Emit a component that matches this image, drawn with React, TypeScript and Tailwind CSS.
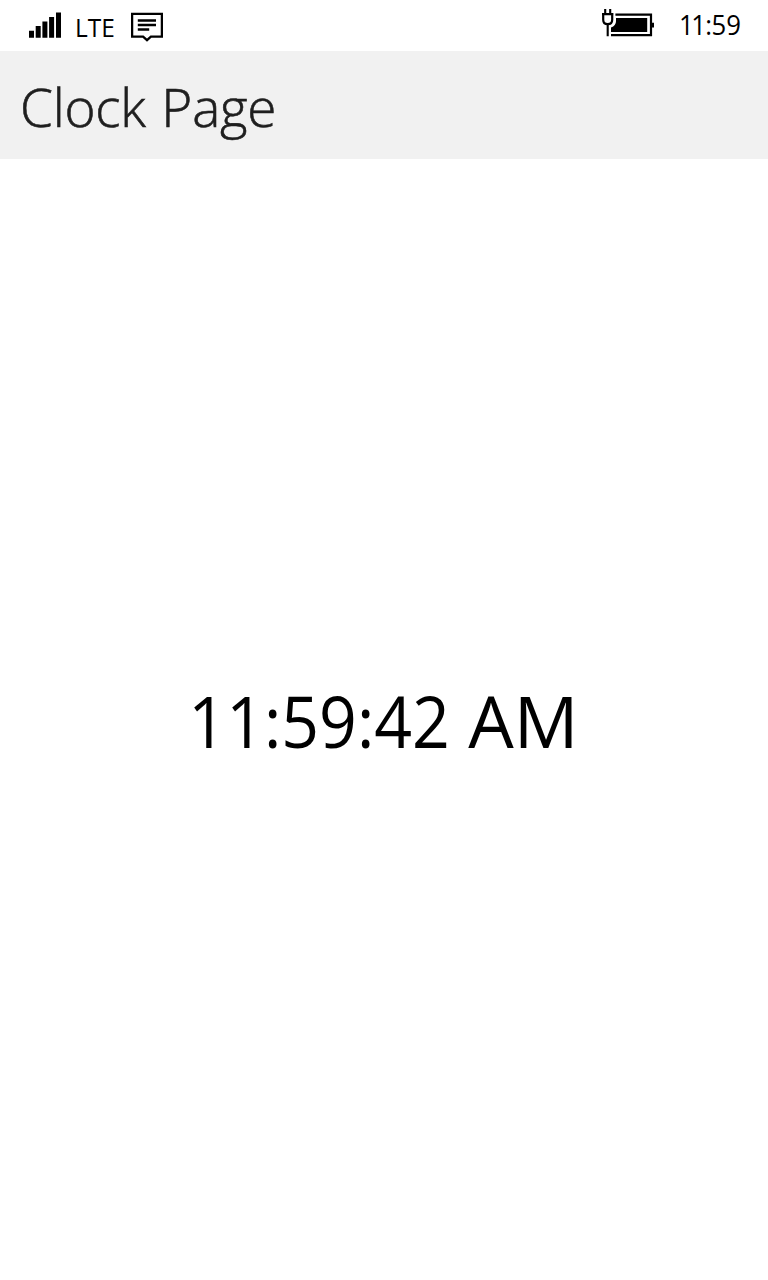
function SignalIcon() {
  return (
    <svg className="mt-[12px] h-[26px] w-[32px]" viewBox="0 0 32 26">
      <path d="M0 18.7h5v7H0zM6.7 14h5v11.7h-5zM13.4 9.4h5v16.3h-5zM20.1 4.9h5v20.8h-5zM27 .4h5v25.3h-5z" />
    </svg>
  );
}

function MessageIcon() {
  return (
    <svg className="mt-[12px] h-[30px] w-[32px]" viewBox="0 0 32 30" fill="none" stroke="black" strokeWidth="2.3">
      <path d="M1.1 1.9h29.8v22.8h-11L16 28.2l-3.9-3.5h-11z" />
      <path d="M6.8 8.5h18.2M6.8 13h18.2M6.8 17.5h11.4" />
    </svg>
  );
}

function BatteryIcon() {
  return (
    <svg className="mt-[8px] h-[30px] w-[53px]" viewBox="601 8 53 30">
      <path d="M615.4 14.7H651V35.2H611" fill="none" stroke="black" strokeWidth="2.2" />
      <path d="M652 22.7h2v4.7h-2zM616 18h31.2v14H611v-4.6q5-1.8 5-6.2z" />
      <path d="M605.2 9v5M610.2 9v5M607.7 24.5v11.8" stroke="black" strokeWidth="2.1" />
      <path d="M602 14.2h11.4M603.2 14.2v5.6q0 4.4 4.5 4.4t4.5-4.4v-5.6" fill="none" stroke="black" strokeWidth="2.2" />
    </svg>
  );
}

export default function App() {
  return (
    <div className="flex h-[1280px] w-[768px] flex-col bg-white font-['Open_Sans','Noto_Sans',sans-serif] text-black">
      <header className="flex h-[51px] items-start justify-between">
        <div className="flex pl-[29px]">
          <SignalIcon />
          <span className="mt-[9px] ml-[14px] w-[56px] text-[26px] leading-[36px]">
            <span className="inline-block origin-left scale-x-[.94]">LTE</span>
          </span>
          <MessageIcon />
        </div>
        <div className="flex pr-[27px]">
          <BatteryIcon />
          <span className="mt-[6px] ml-[24px] flex w-[63px] origin-right scale-x-[.92] justify-end text-[28px] leading-[36px] whitespace-nowrap">
            <span className="tracking-[-2.8px]">1</span>
            <span className="tracking-[-0.6px]">1:</span>
            <span>59</span>
          </span>
        </div>
      </header>
      <div className="flex h-[108px] items-center bg-[#f1f1f1] pt-[3px] pl-[20px] text-[#1f1f1f]">
        <h1 className="text-[53px] leading-[70px] font-light tracking-[-0.2px] whitespace-nowrap [-webkit-text-stroke:0.6px_#1f1f1f] [word-spacing:2px]">Clock Page</h1>
      </div>
      <main className="flex flex-1 items-center justify-center">
        <p className="text-[72px] leading-[96px] whitespace-nowrap">
          <span className="-ml-[25px] inline-block origin-right scale-x-[.918]">11:59:42</span> <span>AM</span>
        </p>
      </main>
    </div>
  );
}
